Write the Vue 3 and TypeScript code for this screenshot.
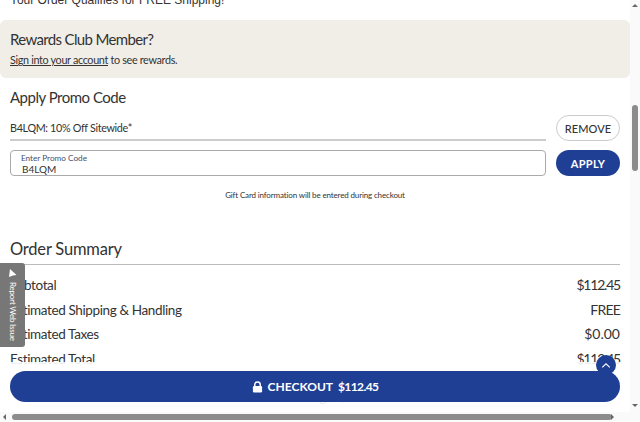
<template>
  <div class="viewport">
    <main class="page">
      <div class="content">
        <p class="shipping-note">Your Order Qualifies for FREE Shipping!</p>

        <section class="rewards">
          <h2 class="rewards-title">Rewards Club Member?</h2>
          <p class="rewards-text"><a href="#" class="link">Sign into your account</a> to see rewards.</p>
        </section>

        <section class="promo">
          <h2 class="promo-title">Apply Promo Code</h2>
          <div class="promo-row applied-row">
            <div class="applied">B4LQM: 10% Off Sitewide*</div>
            <button type="button" class="pill pill-outline">REMOVE</button>
          </div>
          <div class="promo-row">
            <label class="field">
              <span class="field-label">Enter Promo Code</span>
              <input class="field-input" type="text" value="B4LQM" aria-label="Enter Promo Code" />
            </label>
            <button type="button" class="pill pill-solid">APPLY</button>
          </div>
          <p class="gift-note">Gift Card information will be entered during checkout</p>
        </section>

        <section class="summary">
          <h2 class="summary-title">Order Summary</h2>
          <div v-for="row in rows" :key="row.label" class="summary-row">
            <span class="row-label">{{ row.label }}</span>
            <span class="row-value" :class="row.spacing">{{ row.value }}</span>
          </div>
          <div class="savings">Total Savings: $3.47</div>
        </section>
      </div>

      <div class="checkout-bar">
        <button type="button" class="checkout">
          <svg class="lock" viewBox="0 0 12 13" width="11" height="12">
            <path d="M3 6V4a3 3 0 0 1 6 0v2" fill="none" stroke="#fff" stroke-width="1.6" />
            <rect x="1" y="5.5" width="10" height="7" rx="1.4" fill="#fff" />
          </svg>
          <span class="checkout-word">CHECKOUT</span>
          <span class="checkout-price">$112.45</span>
        </button>
      </div>

      <button type="button" class="to-top" aria-label="Back to top">
        <svg viewBox="0 0 12 8" width="10" height="7" fill="none">
          <path d="M1.5 6.2 6 2l4.5 4.2" stroke="#fff" stroke-width="1.4" />
        </svg>
      </button>

      <aside class="report-tab">
        <svg viewBox="0 0 11 11" width="11" height="11">
          <path d="M3 1 9.5 7 6 7.4 2 9Z" fill="#fff" />
        </svg>
        <span class="report-text">Report Web Issue</span>
      </aside>
    </main>

    <div class="scroll-v">
      <span class="arrow arrow-up"></span>
      <span class="thumb-v"></span>
      <span class="arrow arrow-down"></span>
    </div>
    <div class="scroll-h">
      <span class="arrow arrow-left"></span>
      <span class="thumb-h"></span>
      <span class="arrow arrow-right"></span>
    </div>
    <div class="corner"></div>
  </div>
</template>

<script setup lang="ts">
const rows = [
  { label: 'Subtotal', value: '$112.45', spacing: 'tighter' },
  { label: 'Estimated Shipping & Handling', value: 'FREE', spacing: 'tight' },
  { label: 'Estimated Taxes', value: '$0.00', spacing: '' },
  { label: 'Estimated Total', value: '$112.45', spacing: 'tighter' },
]
</script>

<style>
html,
body {
  margin: 0;
  overflow: hidden;
}
</style>

<style scoped>
.viewport {
  width: 640px;
  height: 422px;
  display: grid;
  grid-template-columns: 630px 10px;
  grid-template-rows: 412px 10px;
  background: #fff;
  color: #333;
  font-family: Lato, "Open Sans", sans-serif;
}
.page {
  position: relative;
  overflow: hidden;
}
.content {
  margin-top: -9px;
}
.shipping-note {
  margin: 0 0 11px 10px;
  font-family: "Liberation Sans", Arial, sans-serif;
  font-size: 12px;
  line-height: 18px;
  color: #333;
}
.rewards {
  height: 58px;
  box-sizing: border-box;
  padding: 9px 10px 0;
  background: #f1eee8;
  border-radius: 6px;
}
.rewards-title,
.promo-title {
  margin: 0;
  font-size: 15px;
  font-weight: 400;
  line-height: 20px;
}
.rewards-title {
  letter-spacing: -0.65px;
}
.promo-title {
  letter-spacing: -0.5px;
}
.rewards-text {
  margin: 3px 0 0;
  font-size: 10.8px;
  letter-spacing: -0.33px;
  line-height: 16px;
}
.link {
  color: inherit;
}
.promo {
  padding: 9px 10px 0;
}
.promo-row {
  display: flex;
  gap: 10px;
}
.applied-row {
  margin-top: 8px;
}
.applied {
  flex: 1;
  height: 26px;
  box-sizing: border-box;
  line-height: 26px;
  font-size: 10.8px;
  letter-spacing: -0.35px;
  border-bottom: 2px solid #ccc;
}
.pill {
  width: 64px;
  height: 26px;
  padding: 0;
  border-radius: 13px;
  font-family: inherit;
  font-size: 11px;
  font-weight: 700;
  letter-spacing: 0.3px;
}
.pill-outline {
  background: #fff;
  border: 1px solid #ccc;
  color: #333;
  font-weight: 500;
  letter-spacing: 0.1px;
}
.pill-solid {
  background: #1f3f94;
  border: 0;
  color: #fff;
}
.applied-row + .promo-row {
  margin-top: 9px;
}
.field {
  flex: 1;
  height: 26px;
  box-sizing: border-box;
  border: 1px solid #aaa;
  border-radius: 4px;
  padding: 2px 10px 0;
  display: flex;
  flex-direction: column;
}
.field-label {
  font-size: 8.2px;
  line-height: 10px;
  color: #44506e;
}
.field-input {
  border: 0;
  padding: 0 0 0 1px;
  outline: none;
  font-family: inherit;
  font-size: 10px;
  line-height: 12px;
  height: 12px;
  color: #333;
  background: transparent;
}
.gift-note {
  margin: 13px 0 0;
  text-align: center;
  font-size: 8px;
  letter-spacing: -0.14px;
  line-height: 12px;
}
.summary {
  padding: 36px 10px 0;
}
.summary-title {
  margin: 0 0 8px;
  padding-bottom: 2px;
  border-bottom: 1px solid #bbb;
  font-size: 16.5px;
  font-weight: 400;
  letter-spacing: -0.2px;
  line-height: 25px;
}
.summary-row {
  display: flex;
  justify-content: space-between;
  line-height: 24.7px;
}
.summary-row:last-of-type {
  margin-top: 9px;
}
.row-label {
  font-size: 13.5px;
  letter-spacing: -0.38px;
}
.row-value {
  font-size: 14px;
}
.row-value.tight {
  letter-spacing: -0.8px;
}
.row-value.tighter {
  letter-spacing: -1.2px;
}
.savings {
  margin-top: 17px;
  text-align: center;
  font-size: 13px;
  line-height: 16px;
}
.checkout-bar {
  position: absolute;
  left: 0;
  right: 0;
  top: 362px;
  bottom: 0;
  padding: 9px 10px 0;
  background: rgba(255, 255, 255, 0.9);
}
.checkout {
  width: 100%;
  height: 31px;
  border: 0;
  border-radius: 16px;
  background: #1f3f94;
  color: #fff;
  font-family: inherit;
  font-size: 12px;
  font-weight: 700;
  display: flex;
  align-items: center;
  justify-content: center;
  gap: 5px;
}
.checkout-price {
  letter-spacing: -0.6px;
}
.to-top {
  position: absolute;
  left: 596px;
  top: 355px;
  width: 20px;
  height: 20px;
  padding: 0;
  border: 0;
  border-radius: 50%;
  background: #1f3f94;
  display: flex;
  align-items: center;
  justify-content: center;
}
.report-tab {
  position: absolute;
  left: 0;
  top: 263px;
  width: 25px;
  height: 84px;
  box-sizing: border-box;
  padding-top: 5px;
  background: #777;
  border-radius: 0 3px 3px 0;
  display: flex;
  flex-direction: column;
  align-items: center;
  gap: 3px;
  color: #fff;
}
.report-text {
  writing-mode: vertical-rl;
  white-space: nowrap;
  font-size: 8px;
  letter-spacing: -0.2px;
  line-height: 12px;
}
.scroll-v {
  background: #fafafa;
  position: relative;
}
.thumb-v {
  position: absolute;
  left: 2px;
  top: 105px;
  width: 6px;
  height: 66px;
  border-radius: 3px;
  background: #8c8c8c;
}
.scroll-h {
  background: #fafafa;
  position: relative;
}
.thumb-h {
  position: absolute;
  left: 12px;
  top: 2px;
  width: 600px;
  height: 6px;
  border-radius: 3px;
  background: #8c8c8c;
}
.corner {
  background: #fafafa;
}
.arrow {
  position: absolute;
  width: 0;
  height: 0;
  border: 3px solid transparent;
}
.arrow-up {
  top: 1px;
  left: 2px;
  border-bottom-color: #666;
}
.arrow-down {
  bottom: 2px;
  left: 2px;
  border-top-color: #666;
}
.arrow-left {
  left: 0;
  top: 2px;
  border-right-color: #666;
}
.arrow-right {
  right: 13px;
  top: 2px;
  border-left-color: #666;
}
</style>
